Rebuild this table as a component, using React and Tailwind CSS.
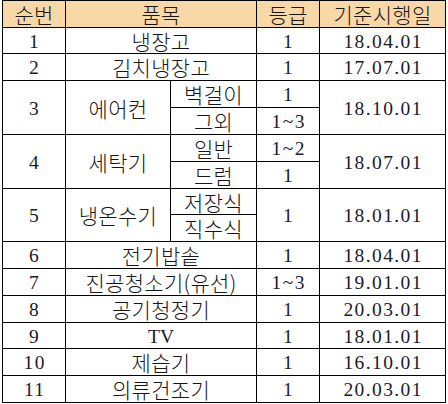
import React from "react";

const ko = { fontFamily: '"Noto Sans CJK KR", sans-serif' };
const num = { fontFamily: '"Liberation Serif", "Noto Sans CJK KR", serif' };

function Cell({ children, className = "", n = false, head = false }) {
  return (
    <div
      className={`flex items-center justify-center leading-none ${
        head ? "bg-[#f9d8a8]" : "bg-white"
      } ${
        n
          ? "pt-[2px] text-[19.5px] tracking-[1.4px] pl-[1.4px] text-[#1a1a2a]"
          : "pt-[1px] text-[21px] font-light tracking-[0.3px] text-[#161616]"
      } ${className}`}
      style={n ? num : ko}
    >
      {children}
    </div>
  );
}

export default function App() {
  return (
    <div className="w-[448px] h-[404px] bg-white">
      <div className="ml-[2px] grid w-[444px] grid-cols-[62px_104px_85px_62px_125px] grid-rows-[26px_25px_26px_26px_26px_26px_26px_25px_26px_26px_26px_26px_25px_26px_26px] gap-px bg-black p-px">
        <Cell head>순번</Cell>
        <Cell head className="col-span-2">품목</Cell>
        <Cell head>등급</Cell>
        <Cell head>기준시행일</Cell>

        <Cell n>1</Cell>
        <Cell className="col-span-2">냉장고</Cell>
        <Cell n>1</Cell>
        <Cell n>18.04.01</Cell>

        <Cell n>2</Cell>
        <Cell className="col-span-2">김치냉장고</Cell>
        <Cell n>1</Cell>
        <Cell n>17.07.01</Cell>

        <Cell n className="row-span-2">3</Cell>
        <Cell className="row-span-2">에어컨</Cell>
        <Cell>벽걸이</Cell>
        <Cell n>1</Cell>
        <Cell n className="row-span-2">18.10.01</Cell>
        <Cell>그외</Cell>
        <Cell n>1~3</Cell>

        <Cell n className="row-span-2">4</Cell>
        <Cell className="row-span-2">세탁기</Cell>
        <Cell>일반</Cell>
        <Cell n>1~2</Cell>
        <Cell n className="row-span-2">18.07.01</Cell>
        <Cell>드럼</Cell>
        <Cell n>1</Cell>

        <Cell n className="row-span-2">5</Cell>
        <Cell className="row-span-2">냉온수기</Cell>
        <Cell>저장식</Cell>
        <Cell n className="row-span-2">1</Cell>
        <Cell n className="row-span-2">18.01.01</Cell>
        <Cell>직수식</Cell>

        <Cell n>6</Cell>
        <Cell className="col-span-2">전기밥솥</Cell>
        <Cell n>1</Cell>
        <Cell n>18.04.01</Cell>

        <Cell n>7</Cell>
        <Cell className="col-span-2">진공청소기(유선)</Cell>
        <Cell n>1~3</Cell>
        <Cell n>19.01.01</Cell>

        <Cell n>8</Cell>
        <Cell className="col-span-2">공기청정기</Cell>
        <Cell n>1</Cell>
        <Cell n>20.03.01</Cell>

        <Cell n>9</Cell>
        <Cell className="col-span-2 !tracking-normal !pl-0" n>TV</Cell>
        <Cell n>1</Cell>
        <Cell n>18.01.01</Cell>

        <Cell n>10</Cell>
        <Cell className="col-span-2">제습기</Cell>
        <Cell n>1</Cell>
        <Cell n>16.10.01</Cell>

        <Cell n>11</Cell>
        <Cell className="col-span-2">의류건조기</Cell>
        <Cell n>1</Cell>
        <Cell n>20.03.01</Cell>
      </div>
    </div>
  );
}
